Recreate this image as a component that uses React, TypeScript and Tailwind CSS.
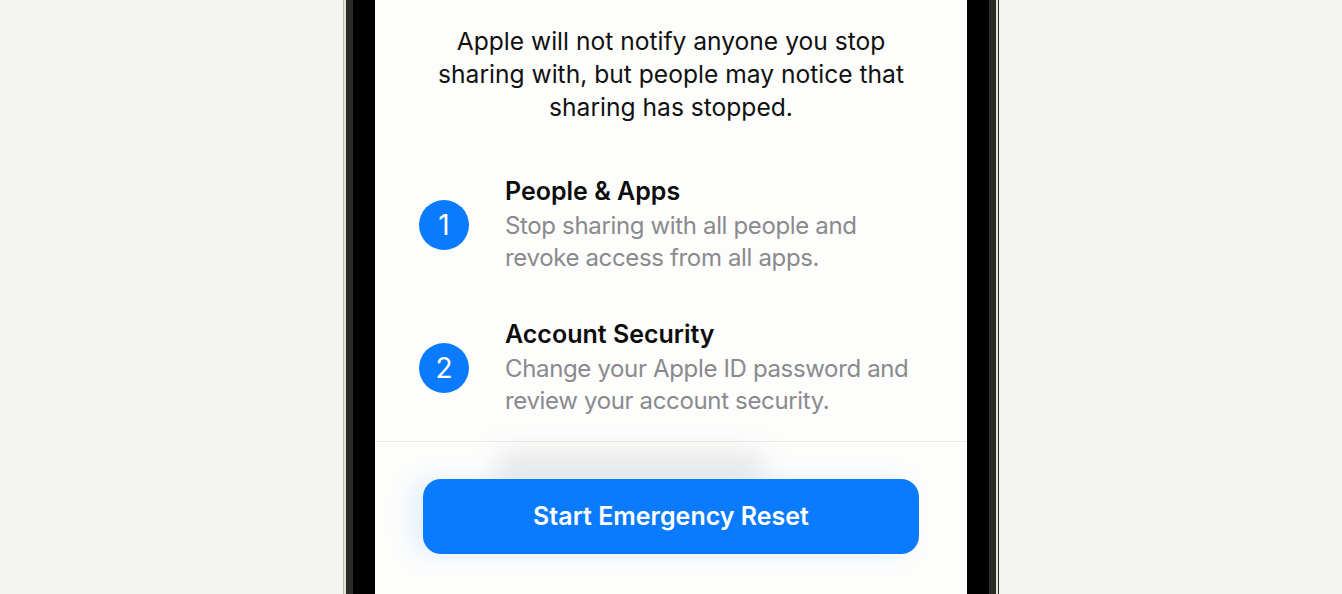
import React from 'react';

const steps = [
  {
    n: '1',
    title: 'People & Apps',
    lines: ['Stop sharing with all people and', 'revoke access from all apps.'],
  },
  {
    n: '2',
    title: 'Account Security',
    lines: ['Change your Apple ID password and', 'review your account security.'],
  },
];

const intro = [
  'Apple will not notify anyone you stop',
  'sharing with, but people may notice that',
  'sharing has stopped.',
];

export default function App() {
  return (
    <div
      className="h-[594px] w-full overflow-hidden bg-[#f4f4f3] flex justify-center"
      style={{ fontFamily: 'Inter, "Noto Sans", sans-serif' }}
    >
      {/* phone frame */}
      <div className="flex h-full">
        <div className="w-[1px] bg-[#b9b8b2]" />
        <div className="w-[2px] bg-[#e6e3d8]" />
        <div className="w-[7px] bg-[#2a2a26]" />
        <div className="w-[22px] bg-black" />

        {/* screen */}
        <div className="w-[592px] bg-[#fdfdfc] flex flex-col">
          <p className="pt-[25px] text-center text-[24.6px] leading-[33px] text-[#111]">
            {intro.map((l) => (
              <span key={l} className="block">{l}</span>
            ))}
          </p>

          <div className="mt-[51px] pl-[44px] flex flex-col gap-[43px]">
            {steps.map((s) => (
              <div key={s.n} className="flex items-center gap-[36px]">
                <div className="w-[50px] h-[50px] rounded-full bg-[#0a7aff] flex items-center justify-center text-white text-[28px] leading-none">
                  {s.n}
                </div>
                <div>
                  <div className="text-[25px] leading-[33px] font-semibold text-[#0c0c0c]">
                    {s.title}
                  </div>
                  <div className="mt-[2px] mb-[1px]">
                    {s.lines.map((l) => (
                      <div key={l} className="text-[24px] leading-[32px] text-[#8a8a8e] tracking-[-0.35px]">
                        {l}
                      </div>
                    ))}
                  </div>
                </div>
              </div>
            ))}
          </div>

          <div className="mt-[23px] h-[1px] bg-[#e9e9e7]" />

          <div className="relative pt-[37px] px-[48px]">
            <div className="absolute left-[120px] top-[10px] w-[270px] h-[28px] rounded-full bg-[#dedede] blur-[12px] opacity-70" />
            <button className="relative w-full h-[75px] rounded-[18px] bg-[#0a7aff] text-white text-[25px] font-semibold shadow-[-12px_0_24px_rgba(10,122,255,0.1)]">
              Start Emergency Reset
            </button>
          </div>
        </div>

        <div className="w-[22px] bg-black" />
        <div className="w-[7px] bg-[#2a2a26]" />
        <div className="w-[2px] bg-[#e6e3d8]" />
        <div className="w-[1px] bg-[#2a2a26]" />
      </div>
    </div>
  );
}
